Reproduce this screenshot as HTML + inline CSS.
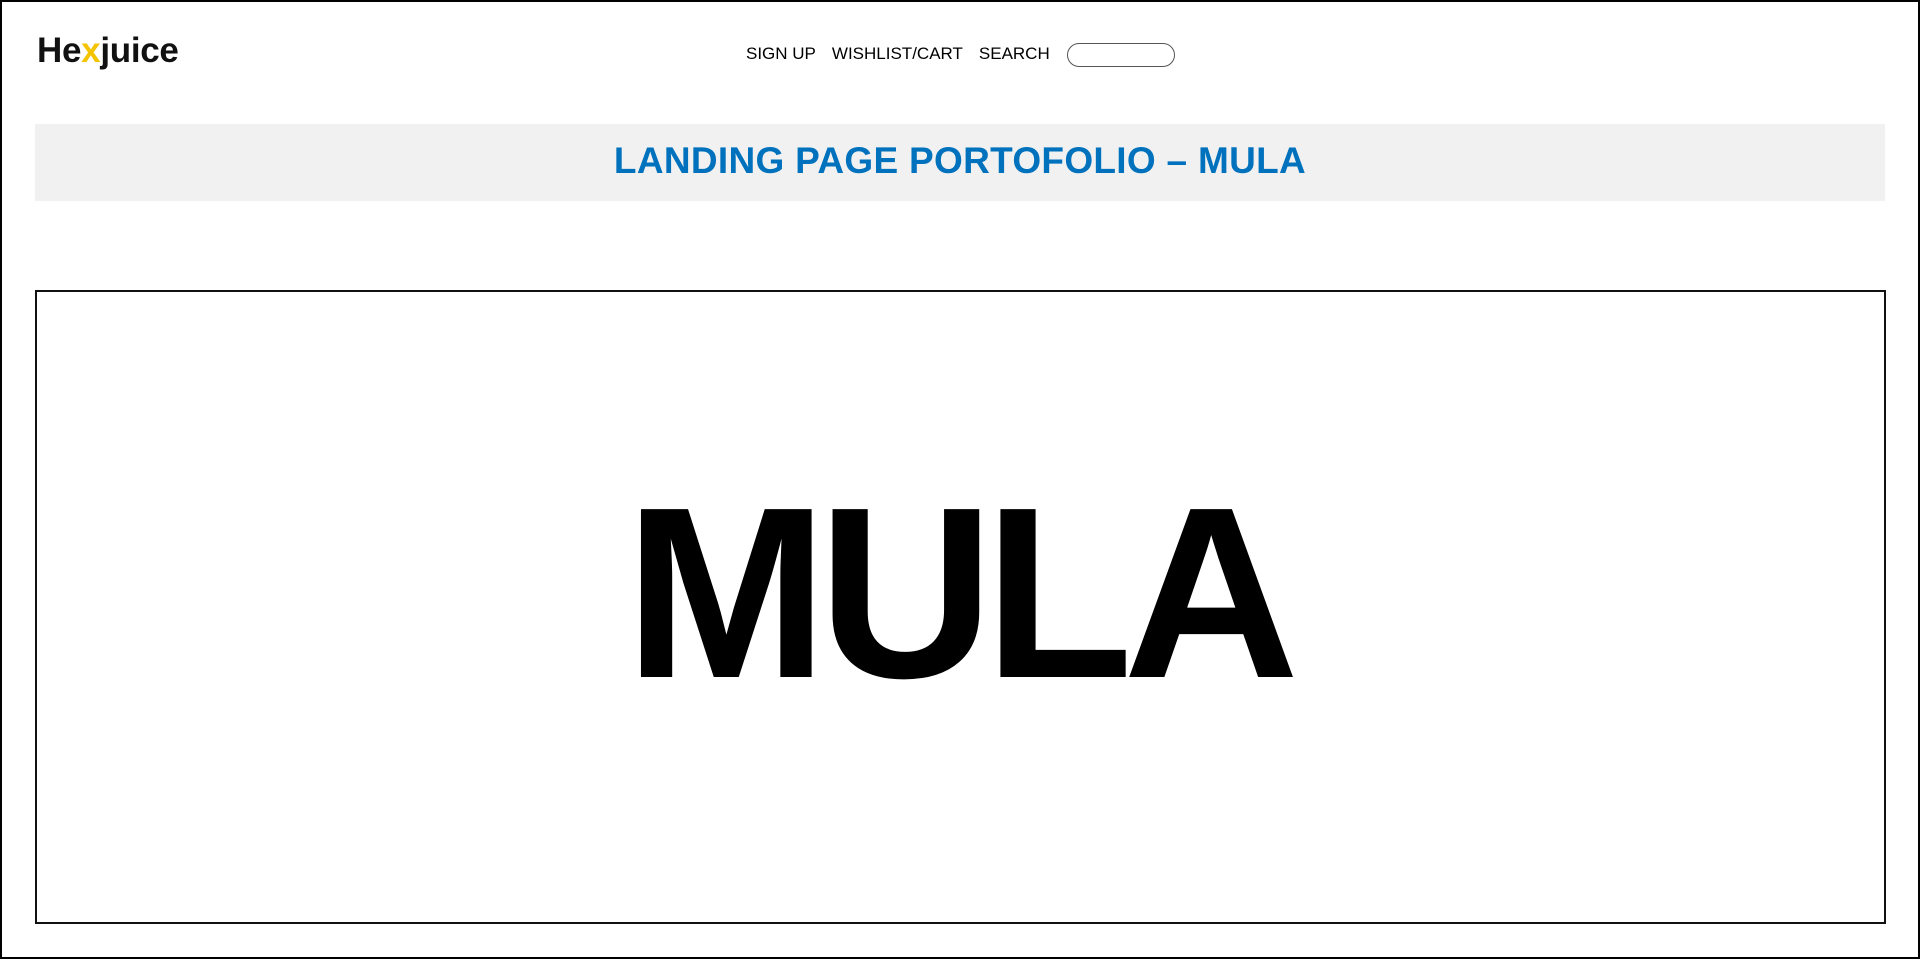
<!DOCTYPE html>
<html><head><meta charset="utf-8"><style>
*{margin:0;padding:0;box-sizing:border-box}
html,body{width:1920px;height:959px;overflow:hidden;background:#fff;font-family:"Liberation Sans",sans-serif}
.page{position:absolute;left:0;top:0;width:1920px;height:959px;border:2px solid #000}
.logo{position:absolute;left:35px;top:29px;font-size:35px;font-weight:bold;color:#111;letter-spacing:-0.3px}
.logo span{color:#f5c400}
.nav{position:absolute;left:744px;top:42px;font-size:17px;color:#000;display:flex;align-items:center;white-space:nowrap}
.nav div{margin-right:16px}
.search{position:absolute;left:1065px;top:41px;width:108px;height:24px;border:1px solid #555;border-radius:12px}
.banner{position:absolute;left:33px;top:122px;width:1850px;height:77px;background:#f1f1f1;text-align:center;line-height:73px;font-size:37px;font-weight:bold;color:#0071bc;letter-spacing:0.3px}
.frame{position:absolute;left:33px;top:288px;width:1851px;height:634px;border:2px solid #111}
.big{position:absolute;left:-3px;width:100%;top:469px;text-align:center;font-size:244px;font-weight:bold;line-height:244px;letter-spacing:-10px;color:#000}
</style></head><body>
<div class="page">
<div class="logo">He<span>x</span>juice</div>
<div class="nav"><div>SIGN UP</div><div>WISHLIST/CART</div><div>SEARCH</div></div>
<div class="search"></div>
<div class="banner">LANDING PAGE PORTOFOLIO – MULA</div>
<div class="frame"></div>
<div class="big">MULA</div>
</div>
</body></html>
